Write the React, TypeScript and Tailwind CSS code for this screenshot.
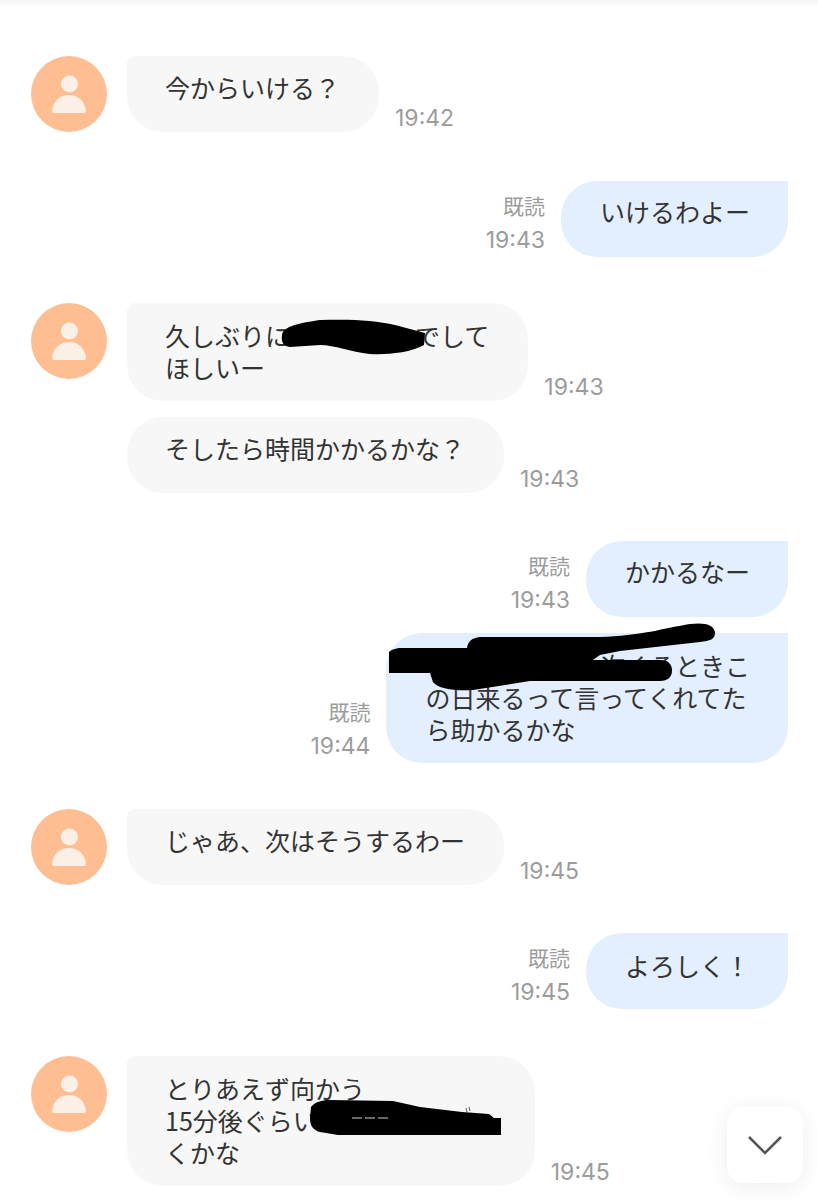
import type { ReactNode } from "react"

function Avatar() {
  return (
    <div className="size-[76px] shrink-0 self-start rounded-full bg-[#ffbd92]">
      <svg viewBox="0 0 76 76" className="size-[76px]">
        <circle cx="38.5" cy="28" r="8.5" fill="#fcefe6" />
        <path d="M23 57 Q21 57 21 55 C22 45 29 39 38 39 C47 39 54 45 55 55 Q55 57 53 57 Z" fill="#fcefe6" />
      </svg>
    </div>
  )
}

function Time({ children }: { children: ReactNode }) {
  return <p className="font-['Inter',sans-serif] text-[23px] leading-[28px] text-[#9c9c9c]">{children}</p>
}

function Incoming({ time, first, children }: { time: string; first?: boolean; children: ReactNode }) {
  return (
    <div className="flex items-end pl-[31px]">
      {first ? <Avatar /> : <div className="w-[76px] shrink-0" />}
      <div
        className={
          first
            ? "ml-5 min-h-[76px] rounded-[36px] rounded-tl-[8px] bg-[#f7f7f7] pt-4 pr-[39px] pb-[18px] pl-[38px] text-[25px] leading-[32px] text-[#333333]"
            : "ml-5 min-h-[76px] rounded-[36px] bg-[#f7f7f7] pt-4 pr-[39px] pb-[18px] pl-[38px] text-[25px] leading-[32px] text-[#333333]"
        }
      >
        {children}
      </div>
      <div className="ml-4">
        <Time>{time}</Time>
      </div>
    </div>
  )
}

function Outgoing({ time, children }: { time: string; children: ReactNode }) {
  return (
    <div className="flex items-end justify-end pr-[30px]">
      <div className="mr-4 flex flex-col items-end pb-[3px]">
        <p className="text-[21px] leading-[42px] text-[#9c9c9c]">既読</p>
        <Time>{time}</Time>
      </div>
      <div className="min-h-[76px] rounded-[36px] rounded-tr-none bg-[#e3effe] pt-4 pr-[38px] pb-[18px] pl-[39px] text-[25px] leading-[32px] text-[#333333]">
        {children}
      </div>
    </div>
  )
}

// marker strokes drawn over the screenshot, in page coordinates
function Redactions() {
  return (
    <svg viewBox="0 0 818 1200" className="absolute inset-0 h-[1200px] w-[818px]">
      <path
        d="M282 335 C283 326 300 323 320 320 C350 319 375 320 395 325 L425 333 L424 345 C410 353 385 355 370 354 C350 352 335 345 320 345 L290 347 C283 346 281 342 282 335 Z"
        fill="#000"
      />
      <path
        d="M389 673 L389 652 C392 649 398 648 400 648 L467 648 C468 641 472 638 480 637 L600 637 C640 636 665 628 690 624 C705 622 715 625 715 633 C715 639 710 641 700 642 L620 651 L600 655 L590 662 L500 673 Z"
        fill="#000"
      />
      <path
        d="M430 673 C432 664 440 660 460 660 L660 660 C669 660 672 665 672 670 C672 677 668 681 660 681 L530 681 L473 690 C455 691 438 689 433 682 Z"
        fill="#000"
      />
      <path
        d="M311 1107 C315 1102 322 1100 329 1100 L393 1101 L420 1107 L462 1112 L489 1114 L494 1118 L501 1118 L501 1135 L338 1135 L320 1132 C313 1130 310 1126 310 1118 Z"
        fill="#000"
      />
      <path d="M352 1118 L388 1118" stroke="#8a8a8a" strokeWidth="1.5" strokeDasharray="10 3" />
      <path d="M466 1108 L467 1112 M469 1107 L470 1111" stroke="#555" strokeWidth="1" />
    </svg>
  )
}

export default function App() {
  return (
    <div className="relative h-[1200px] w-[818px] overflow-hidden bg-white font-['Noto_Sans_CJK_JP',sans-serif]">
      <div className="h-2 bg-gradient-to-b from-[#f6f6f6] to-white" />
      <div className="flex flex-col pt-12">
        <Incoming first time="19:42">
          <p className="-mt-px">今からいける？</p>
        </Incoming>
        <div className="mt-[49px]">
          <Outgoing time="19:43">
            <p className="-mt-[2px]">いけるわよー</p>
          </Outgoing>
        </div>
        <div className="mt-[46px]">
          <Incoming first time="19:43">
            <p>
              久しぶりに<span className="inline-block w-[125px]" />でして
            </p>
            <p>ほしいー</p>
          </Incoming>
        </div>
        <div className="mt-4">
          <Incoming time="19:43">
            <p className="-mt-px">そしたら時間かかるかな？</p>
          </Incoming>
        </div>
        <div className="mt-12">
          <Outgoing time="19:43">
            <p className="-mt-[2px]">かかるなー</p>
          </Outgoing>
        </div>
        <div className="mt-4">
          <Outgoing time="19:44">
            <p>
              <span className="inline-block w-[175px]" />次くるときこ
            </p>
            <p>の日来るって言ってくれてた</p>
            <p>ら助かるかな</p>
          </Outgoing>
        </div>
        <div className="mt-[46px]">
          <Incoming first time="19:45">
            <p className="-mt-px">じゃあ、次はそうするわー</p>
          </Incoming>
        </div>
        <div className="mt-12">
          <Outgoing time="19:45">よろしく！</Outgoing>
        </div>
        <div className="mt-[47px]">
          <Incoming first time="19:45">
            <p>とりあえず向かう</p>
            <p>
              15分後ぐらい<span className="inline-block w-[178px]" />
            </p>
            <p>くかな</p>
          </Incoming>
        </div>
      </div>
      <Redactions />
      <button className="absolute top-[1107px] left-[727px] flex size-[76px] items-center justify-center rounded-2xl bg-white shadow-[0_4px_24px_rgba(0,0,0,0.07)]">
        <svg viewBox="0 0 36 20" className="h-5 w-9" fill="none" stroke="#555555" strokeWidth="2.5">
          <path d="M2 2 L18 18 L34 2" />
        </svg>
      </button>
    </div>
  )
}
